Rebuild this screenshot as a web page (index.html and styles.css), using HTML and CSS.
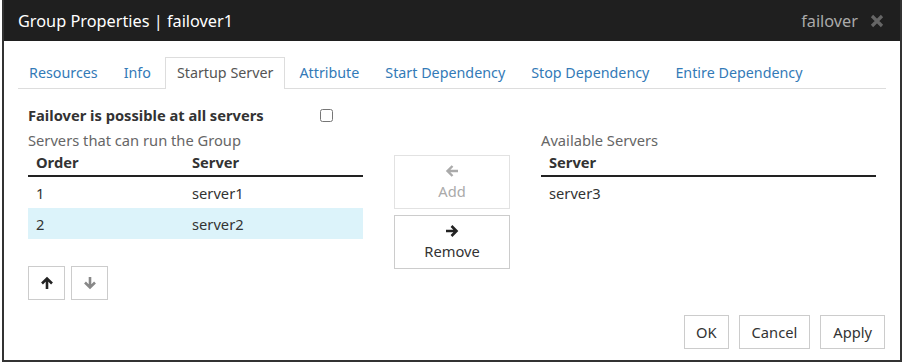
FILE: index.html
```html
<!DOCTYPE html>
<html>
<head>
    <title>Group Properties | failover1</title>
    <link rel="stylesheet" href="styles.css">
</head>
<body>
    <div class="dialog">
        <div class="dialog-header">
            <span class="dialog-title">Group Properties | failover1</span>
            <span class="dialog-group">failover</span>
            <svg class="dialog-close" width="14" height="14" viewBox="0 0 14 14"><path d="M2 2l10 10M12 2L2 12" stroke="#666" stroke-width="3.2"/></svg>
        </div>

        <div class="dialog-body">
            <ul class="tabs">
                <li class="tab">Resources</li>
                <li class="tab">Info</li>
                <li class="tab active">Startup Server</li>
                <li class="tab">Attribute</li>
                <li class="tab">Start Dependency</li>
                <li class="tab">Stop Dependency</li>
                <li class="tab">Entire Dependency</li>
            </ul>

            <div class="tab-content">
                <div class="failover-row">
                    <label class="failover-label">Failover is possible at all servers</label>
                    <input type="checkbox" class="failover-check">
                </div>

                <div class="columns">
                    <div class="col col-list">
                        <div class="col-title">Servers that can run the Group</div>
                        <table class="server-table">
                            <thead>
                                <tr><th class="c-order">Order</th><th>Server</th></tr>
                            </thead>
                            <tbody>
                                <tr><td class="c-order">1</td><td>server1</td></tr>
                                <tr class="selected"><td class="c-order">2</td><td>server2</td></tr>
                            </tbody>
                        </table>
                        <div class="order-buttons">
                            <button class="btn btn-icon">
                                <svg width="14" height="14" viewBox="0 0 14 14"><path d="M7 13V2.5M2 7.5L7 2.5l5 5" fill="none" stroke="#222" stroke-width="2.6"/></svg>
                            </button>
                            <button class="btn btn-icon">
                                <svg width="14" height="14" viewBox="0 0 14 14"><path d="M7 1v10.5M2 6.5l5 5 5-5" fill="none" stroke="#888" stroke-width="2.6"/></svg>
                            </button>
                        </div>
                    </div>

                    <div class="col col-move">
                        <button class="btn btn-move disabled">
                            <svg width="14" height="14" viewBox="0 0 14 14"><path d="M13 7H2.5M7.5 2L2.5 7l5 5" fill="none" stroke="#aaa" stroke-width="2.4"/></svg>
                            <span>Add</span>
                        </button>
                        <button class="btn btn-move">
                            <svg width="14" height="14" viewBox="0 0 14 14"><path d="M1 7h10.5M6.5 2l5 5-5 5" fill="none" stroke="#222" stroke-width="2.6"/></svg>
                            <span>Remove</span>
                        </button>
                    </div>

                    <div class="col col-list">
                        <div class="col-title">Available Servers</div>
                        <table class="server-table">
                            <thead>
                                <tr><th>Server</th></tr>
                            </thead>
                            <tbody>
                                <tr><td>server3</td></tr>
                            </tbody>
                        </table>
                    </div>
                </div>
            </div>

            <div class="dialog-footer">
                <button class="btn btn-footer">OK</button>
                <button class="btn btn-footer">Cancel</button>
                <button class="btn btn-footer">Apply</button>
            </div>
        </div>
    </div>
</body>
</html>
```

FILE: styles.css
```css
body {
    margin: 0;
    background: #fff;
    font-family: "Noto Sans", "Liberation Sans", sans-serif;
    font-size: 14.7px;
    color: #333;
}
.dialog {
    margin-left: 2px;
    width: 896px;
    height: 360px;
    border: 2px solid #333;
    border-top: none;
    display: flex;
    flex-direction: column;
}
.dialog-header {
    height: 41px;
    background: #1f1f1f;
    display: flex;
    align-items: center;
    padding: 0 16px 0 14px;
}
.dialog-title {
    color: #fff;
    font-size: 16.3px;
    flex: 1;
}
.dialog-group {
    color: #aaa;
    font-size: 16.3px;
    margin-right: 12px;
}
.dialog-body {
    flex: 1;
    padding: 16px 14px 0 14px;
    display: flex;
    flex-direction: column;
}
.tabs {
    list-style: none;
    margin: 0;
    padding: 0;
    display: flex;
    border-bottom: 1px solid #ddd;
    font-size: 14.3px;
}
.tab {
    height: 30px;
    line-height: 29px;
    padding: 0 11px;
    margin-right: 2px;
    color: #337ab7;
    border: 1px solid transparent;
    border-bottom: none;
    margin-bottom: -1px;
}
.tab:first-child {
    padding-left: 10px;
}
.tab.active {
    color: #555;
    border-color: #ddd;
    background: #fff;
    height: 31px;
}
.tab-content {
    flex: 1;
    padding: 16px 10px 0 10px;
}
.failover-row {
    display: flex;
    align-items: center;
    height: 20px;
}
.failover-label {
    font-weight: bold;
    width: 292px;
}
.failover-check {
    margin: 0;
    width: 13px;
    height: 13px;
}
.columns {
    display: flex;
    gap: 31px;
    margin-top: 5px;
}
.col-list {
    width: 335px;
}
.col-title {
    color: #666;
    height: 20px;
    line-height: 20px;
}
.server-table {
    width: 100%;
    border-collapse: collapse;
}
.server-table th {
    text-align: left;
    font-weight: bold;
    height: 23px;
    padding: 0 8px 2px 8px;
    border-bottom: 2px solid #222;
}
.server-table td {
    height: 31px;
    padding: 0 8px;
}
.server-table .c-order {
    width: 140px;
}
.server-table tr.selected td {
    background: #dcf3fa;
}
.btn {
    background: #fff;
    border: 1px solid #ccc;
    font-family: inherit;
    font-size: 14.7px;
    color: #333;
    padding: 0;
}
.order-buttons {
    display: flex;
    gap: 6px;
    margin-top: 27px;
}
.btn-icon {
    width: 37px;
    height: 34px;
    display: flex;
    align-items: center;
    justify-content: center;
}
.col-move {
    width: 116px;
    display: flex;
    flex-direction: column;
    gap: 6px;
    padding-top: 25px;
}
.btn-move {
    height: 54px;
    display: flex;
    flex-direction: column;
    align-items: center;
    justify-content: center;
    gap: 3px;
}
.btn-move.disabled {
    border-color: #e2e2e2;
    color: #aaa;
}
.dialog-footer {
    display: flex;
    justify-content: flex-end;
    gap: 10px;
    padding: 0 1px 11px 0;
}
.btn-footer {
    height: 34px;
    padding: 0 12px;
}
.btn-footer:first-child {
    padding: 0 11px;
}
```
